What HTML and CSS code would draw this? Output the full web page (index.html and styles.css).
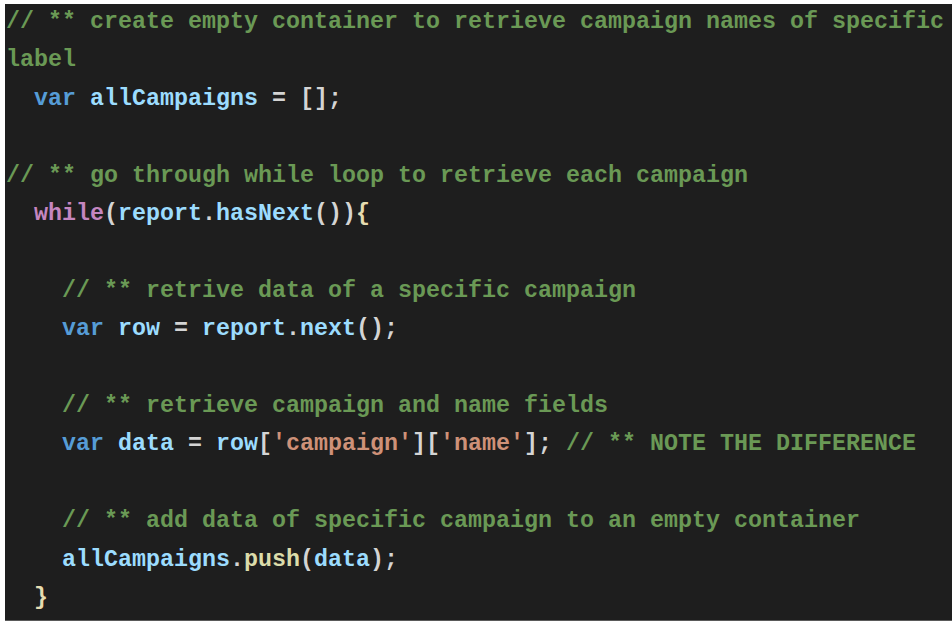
FILE: index.html
```html
<!DOCTYPE html>
<html>
<head>
<meta charset="utf-8">
<link rel="stylesheet" href="styles.css">
</head>
<body>
<div class="editor">
<pre class="code"><span class="c">// ** create empty container to retrieve campaign names of specific</span>
<span class="c">label</span>
  <span class="k">var</span> <span class="v">allCampaigns</span> <span class="p">= [];</span>

<span class="c">// ** go through while loop to retrieve each campaign</span>
  <span class="w">while</span><span class="b1">(</span><span class="v">report</span><span class="p">.</span><span class="v">hasNext</span><span class="b2">()</span><span class="b1">)</span><span class="b3">{</span>

    <span class="c">// ** retrive data of a specific campaign</span>
    <span class="k">var</span> <span class="v">row</span> <span class="p">=</span> <span class="v">report</span><span class="p">.</span><span class="v">next</span><span class="b1">()</span><span class="p">;</span>

    <span class="c">// ** retrieve campaign and name fields</span>
    <span class="k">var</span> <span class="v">data</span> <span class="p">=</span> <span class="v">row</span><span class="b1">[</span><span class="s">'campaign'</span><span class="b1">][</span><span class="s">'name'</span><span class="b1">]</span><span class="p">;</span> <span class="c">// ** NOTE THE DIFFERENCE</span>

    <span class="c">// ** add data of specific campaign to an empty container</span>
    <span class="v">allCampaigns</span><span class="p">.</span><span class="f">push</span><span class="b1">(</span><span class="v">data</span><span class="b1">)</span><span class="p">;</span>
  <span class="b3">}</span></pre>
</div>
</body>
</html>
```

FILE: styles.css
```css
html, body {
  margin: 0;
  padding: 0;
  background: #ffffff;
}
body {
  padding: 4px 0 4px 5px;
}
.editor {
  background: #1e1e1e;
  height: 617px;
  border-bottom: 1px solid #5a5a5a;
  box-sizing: border-box;
  overflow: hidden;
}
.code {
  margin: -1px 0 0 0;
  padding: 0 0 0 1px;
  font-family: "Liberation Mono", "Courier New", monospace;
  font-weight: bold;
  font-size: 23.33px;
  line-height: 38.4px;
  color: #d4d4d4;
  white-space: pre;
}
.c { color: #6a9955; }
.k { color: #569cd6; }
.v { color: #9cdcfe; }
.w { color: #c586c0; }
.f { color: #dcdcaa; }
.s { color: #ce9178; }
.p { color: #d4d4d4; }
.b1 { color: #d4d4d4; }
.b2 { color: #d4d4d4; }
.b3 { color: #e6dcb0; }
```
